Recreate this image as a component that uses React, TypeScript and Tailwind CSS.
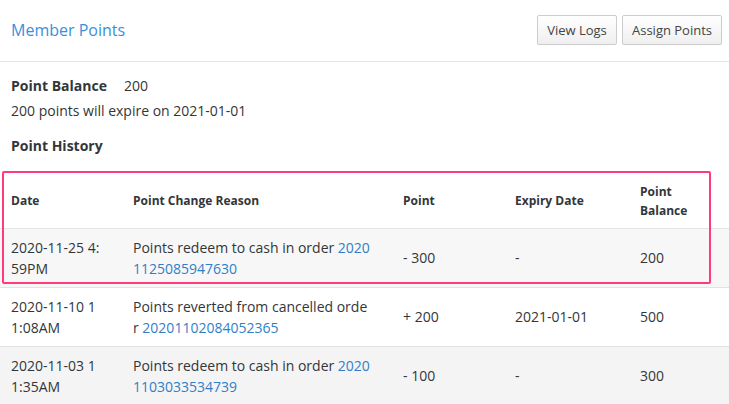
import React from 'react';

const rows = [
    { date: '2020-11-25 4:59PM', reason: 'Points redeem to cash in order ', order: '20201125085947630', point: '- 300', expiry: '-', balance: '200', bg: 'bg-[#f7f7f7]' },
    { date: '2020-11-10 11:08AM', reason: 'Points reverted from cancelled order ', order: '20201102084052365', point: '+ 200', expiry: '2021-01-01', balance: '500', bg: 'bg-white' },
    { date: '2020-11-03 11:35AM', reason: 'Points redeem to cash in order ', order: '20201103033534739', point: '- 100', expiry: '-', balance: '300', bg: 'bg-[#f4f4f4]' },
];

export default function App() {
    return (
        <div className="w-[729px] h-[404px] overflow-hidden bg-white text-[14px] leading-[21px] text-[#333639]" style={{ fontFamily: '"Open Sans", "Liberation Sans", sans-serif' }}>
            <div className="h-[62px] flex items-center justify-between pl-[11px] pr-[7px] border-b border-[#e6e6e6]">
                <h1 className="text-[16px] text-[#3a8fd9] -mt-[1px]">Member Points</h1>
                <div className="flex gap-[5px] -mt-[1px]">
                    <button className="w-[80px] h-[30px] rounded-[2px] border border-[#cccccc] bg-gradient-to-b from-white to-[#efefef] text-[#444] text-[13px]">View Logs</button>
                    <button className="w-[100px] h-[30px] rounded-[2px] border border-[#cccccc] bg-gradient-to-b from-white to-[#efefef] text-[#444] text-[13px]">Assign Points</button>
                </div>
            </div>

            <div className="px-[11px] pt-[13px]">
                <div className="flex">
                    <span className="font-bold w-[113px]">Point Balance</span>
                    <span>200</span>
                </div>
                <p className="mt-[4px]">200 points will expire on 2021-01-01</p>
                <h2 className="font-bold mt-[14px]">Point History</h2>
            </div>

            <div className="relative mt-[16px]">
                <table className="w-full table-fixed border-collapse break-all">
                    <colgroup>
                        <col className="w-[122px]" />
                        <col className="w-[270px]" />
                        <col className="w-[112px]" />
                        <col className="w-[125px]" />
                        <col className="w-[100px]" />
                    </colgroup>
                    <thead>
                        <tr className="border-b border-[#e3e3e3] text-left text-[12px] leading-[19px]">
                            <th className="h-[56px] pl-[11px] pr-[11px] pt-[2px] font-bold">Date</th>
                            <th className="pl-[11px] pr-[11px] pt-[2px] font-bold">Point Change Reason</th>
                            <th className="pl-[11px] pr-[11px] pt-[2px] font-bold">Point</th>
                            <th className="pl-[11px] pr-[11px] pt-[2px] font-bold">Expiry Date</th>
                            <th className="pl-[11px] pr-[11px] pt-[2px] font-bold break-normal">Point<br />Balance</th>
                        </tr>
                    </thead>
                    <tbody>
                        {rows.map((r) => (
                            <tr key={r.order} className={`${r.bg} border-b border-[#e3e3e3]`}>
                                <td className="pl-[11px] pr-[21px] py-[8px] align-middle">{r.date}</td>
                                <td className="pl-[11px] pr-[21px] py-[8px] align-middle">
                                    {r.reason}
                                    <a className="text-[#2f7fc8]">{r.order}</a>
                                </td>
                                <td className="pl-[11px] py-[8px] align-middle">{r.point}</td>
                                <td className="pl-[11px] py-[8px] align-middle">{r.expiry}</td>
                                <td className="pl-[11px] py-[8px] align-middle">{r.balance}</td>
                            </tr>
                        ))}
                    </tbody>
                </table>
                <div className="absolute left-[2px] top-[-1px] w-[709px] h-[113px] border-2 border-[#ff3b7a] rounded-[2px] pointer-events-none" />
            </div>
        </div>
    );
}
